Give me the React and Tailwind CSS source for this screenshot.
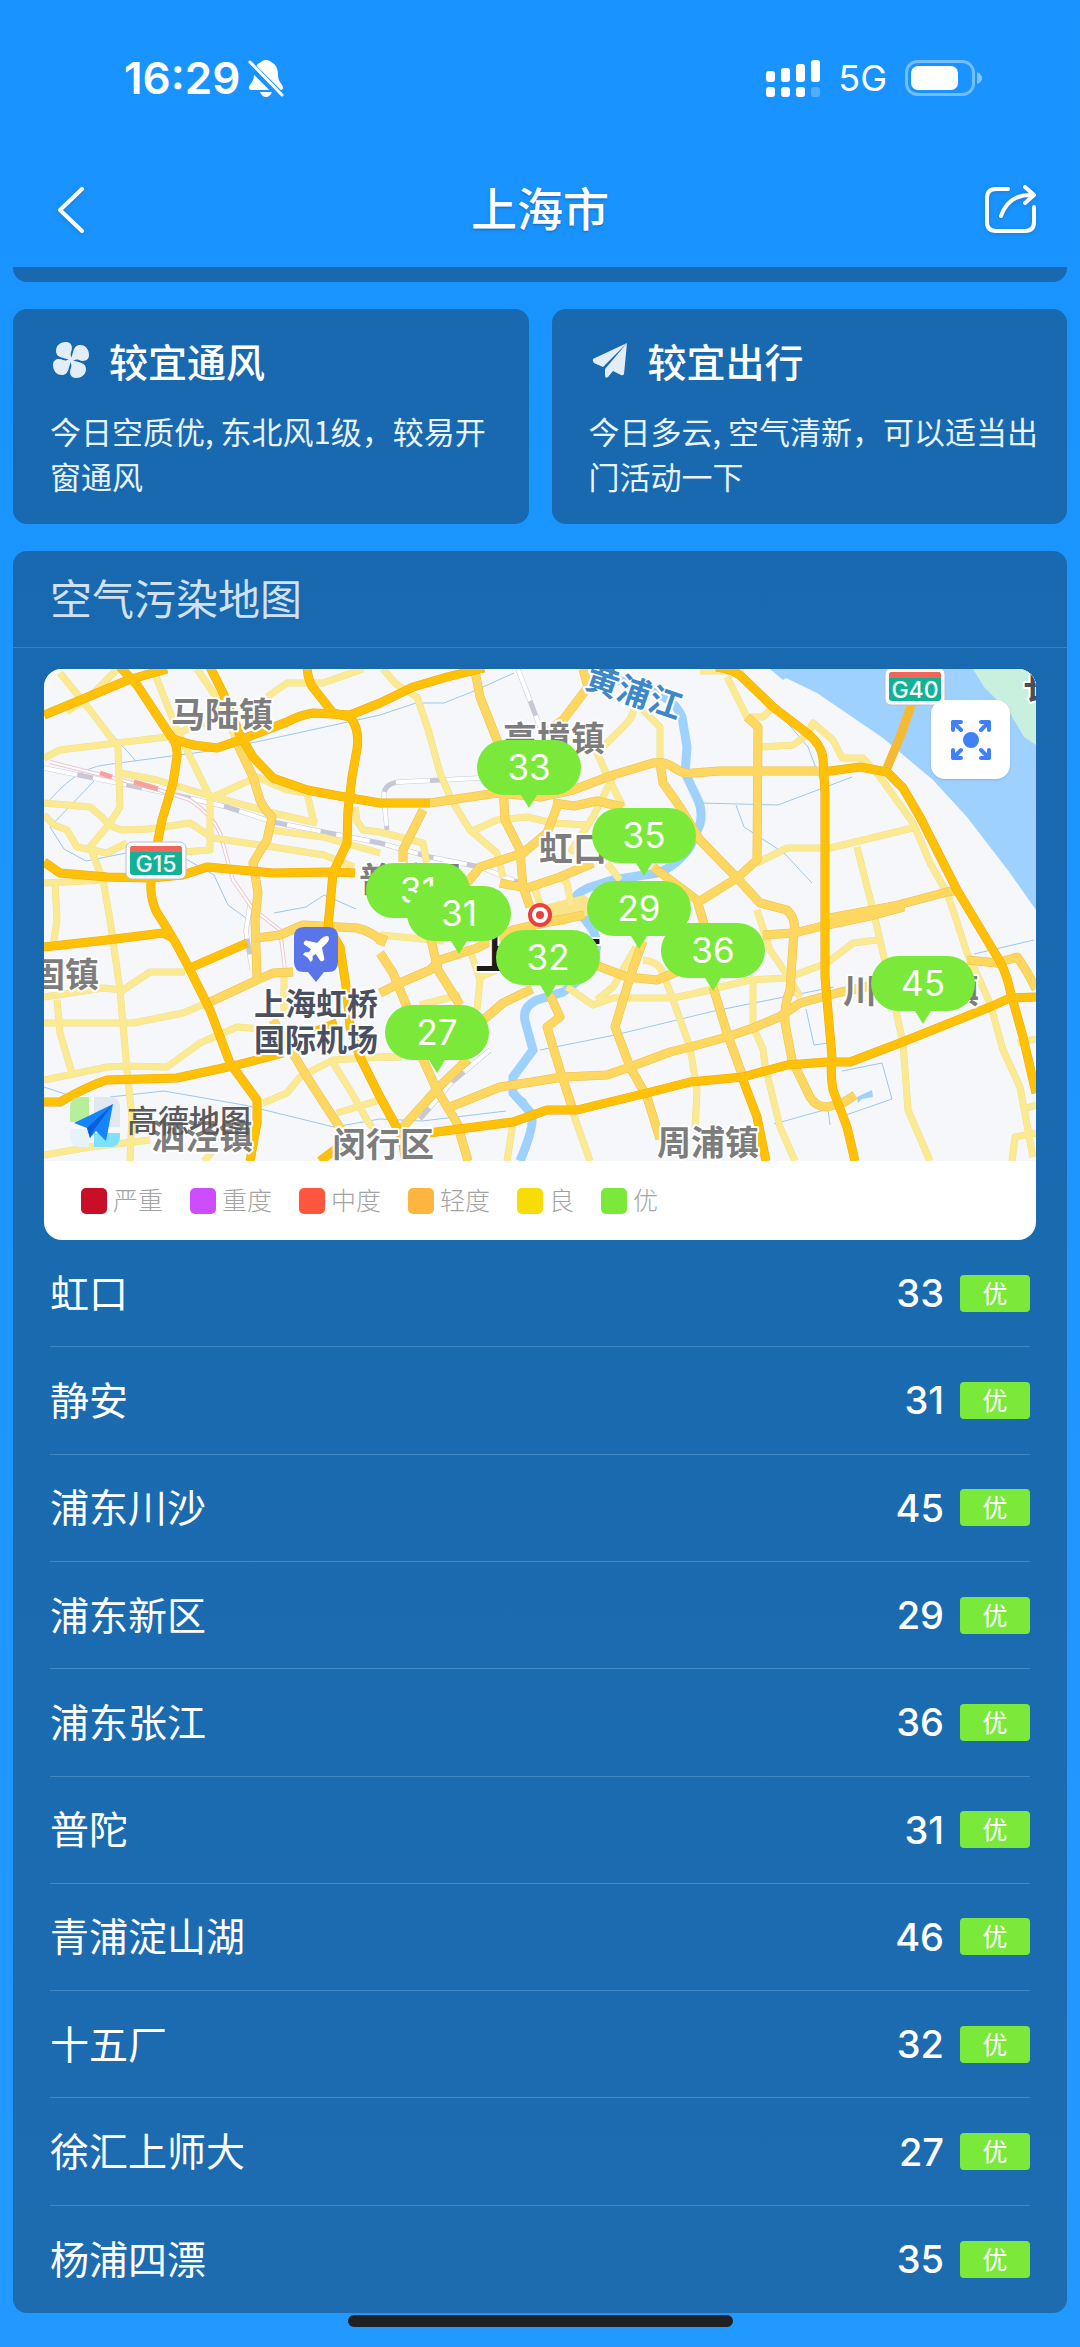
const INTER = "font-['Inter','Noto_Sans_CJK_SC',sans-serif]";

const MAP_W = 992;
const MAP_H = 492;

const tips = [
  { icon: 'fan', title: '较宜通风', text: '今日空质优, 东北风1级，较易开窗通风' },
  { icon: 'plane', title: '较宜出行', text: '今日多云, 空气清新，可以适当出门活动一下' },
];

const stations = [
  { name: '虹口', aqi: 33 },
  { name: '静安', aqi: 31 },
  { name: '浦东川沙', aqi: 45 },
  { name: '浦东新区', aqi: 29 },
  { name: '浦东张江', aqi: 36 },
  { name: '普陀', aqi: 31 },
  { name: '青浦淀山湖', aqi: 46 },
  { name: '十五厂', aqi: 32 },
  { name: '徐汇上师大', aqi: 27 },
  { name: '杨浦四漂', aqi: 35 },
];

const legend = [
  { label: '严重', color: 'bg-[#c80f27]' },
  { label: '重度', color: 'bg-[#cd4dfd]' },
  { label: '中度', color: 'bg-[#ff573f]' },
  { label: '轻度', color: 'bg-[#ffb53e]' },
  { label: '良', color: 'bg-[#f7dd05]' },
  { label: '优', color: 'bg-[#7ae93a]' },
];

// x is the tip of the pin, y the top of its bubble
const pins = [
  { aqi: 33, x: 485, y: 71 },
  { aqi: 35, x: 600, y: 139 },
  { aqi: 31, x: 374, y: 194 },
  { aqi: 31, x: 415, y: 217 },
  { aqi: 29, x: 595, y: 212 },
  { aqi: 36, x: 669, y: 254 },
  { aqi: 32, x: 504, y: 261 },
  { aqi: 45, x: 879, y: 287 },
  { aqi: 27, x: 393, y: 336 },
];

const minorRoads = [
  'M16 4L46 41L74 78L76 138L66 154L46 178L59 211L66 251L76 321L83 401L88 448L86 492',
  'M73 0L52 22L23 43',
  'M0 89L16 81L73 74L123 68L160 54',
  'M109 0L133 61L166 128L166 181L138 183',
  'M153 0L172 28L183 48L193 74',
  'M76 104L113 111L153 123L229 144L273 154',
  'M169 128L213 108L243 121L263 124L270 154',
  'M0 134L46 138L58 148Q68 160 79 161L105 160L146 154L169 169L229 178L280 186L310 198',
  'M0 146L10 156L23 161L33 178L63 184L83 174',
  'M226 161L279 168L336 184',
  'M223 28L243 14L279 14L319 0',
  'M311 138L313 152L319 161L336 163L379 174L383 196',
  'M0 214L63 211',
  'M11 214L13 251L9 278',
  'M0 328L59 319L79 321L106 303L141 303',
  'M0 354L89 354L139 344L163 334',
  'M0 411L63 398L83 397L123 398L156 374L193 358L229 361',
  'M13 331L16 364L28 404',
  'M0 486L46 478L106 471',
  'M219 434L243 424L256 408L289 391L336 388L358 388',
  'M289 394L306 421L323 451L336 470',
  'M293 444L336 431',
  'M160 492L172 478',
  'M339 0L352 15L373 28L384 60L396 104L408 132L426 161L453 184L459 208',
  'M426 163L453 151L483 148L509 154L543 156',
  'M589 34Q592 44 583 54L553 84L563 106L579 138',
  'M599 41L616 58L616 94',
  'M569 108L549 148L526 184',
  'M563 194L576 211',
  'M516 208L523 214L527 236',
  'M490 218L498 240',
  'M683 8L703 48L719 48L728 39',
  'M718 78L749 76L763 66L769 54L789 71L798 89L819 89L836 108L869 154L886 194L903 224L909 241L923 284L946 334L959 381L976 418L989 488',
  'M713 194L743 179L786 179L873 158',
  'M813 178L829 241L843 301L859 374L864 441L886 492',
  'M713 241L726 281L746 310L756 328',
  'M656 323L706 311L743 309L783 294L809 274L833 271',
  'M709 311L709 358L719 380L721 396L736 458L751 492',
  'M968 492L971 468L992 464',
  'M974 374L992 370',
  'M980 440L992 436',
  'M523 318L549 336L569 329L629 329L672 320',
  'M553 331L569 318L592 278',
  'M599 291Q614 292 619 304L629 331L646 378L653 421L651 461',
  'M469 454L463 492',
  'M529 444L546 492',
  'M426 281L436 311L433 341',
  'M376 336L416 326',
  'M436 308L470 294',
  'M336 388L358 388',
  'M336 266L400 272',
  'M240 304L240 350',
  'M656 2L700 2',
];

const midRoads = [
  'M193 74L209 108L216 131Q220 140 228 148L223 171L209 194L214 224L211 251L213 308',
  'M213 269L236 266L259 256L313 259Q326 262 338 272',
  'M166 333L213 311L229 304L249 303',
  'M229 351L263 408L298 462',
  'M431 2L436 28L453 71L459 118L461 151L476 181L479 218L486 238',
  'M386 134L453 124L496 128L529 121L569 106L609 94Q620 92 629 98Q640 106 649 104L676 102L779 102',
  'M379 141L359 181L359 194',
  'M539 0L544 18L519 51L503 62',
  'M509 134L530 137L553 132L579 138',
  'M513 138L503 164L479 184L436 198L423 214L400 230',
  'M456 214L483 219L516 208L549 194',
  'M616 94L619 114L636 138L656 171L693 209L716 234L743 241Q752 250 750 261L746 321Q740 336 741 354L748 391L766 428Q772 438 783 438L799 434L811 426',
  'M609 198L653 231L662 262',
  'M656 232L693 209L713 191L714 58L703 48',
  'M786 249L850 237L903 223L916 221',
  'M719 266L750 264L783 256L830 246L860 238',
  'M406 438L456 418L469 416L519 408L563 406L586 398L626 383L646 378L683 368L709 359L735 348L756 334L793 324L830 316',
  'M336 324L356 314L386 301L396 291L433 279L469 261L500 254L540 246',
  'M336 284L349 304L363 338',
  'M386 266L394 301L416 336',
  'M376 384L393 421L413 454L424 492',
  'M488 320L459 334L438 352',
  'M424 390L395 418L359 458',
  'M506 326L516 348L503 358L516 401L529 441',
  'M546 294L583 308L613 311L640 300',
  'M599 272L586 308L571 358L586 398L603 428L616 470',
  'M669 318L683 364L699 408',
  'M923 291L953 294L973 288Q982 300 992 320',
  'M340 266L336 276',
];

const majorRoads = [
  'M0 46L39 30L84 11L123 0',
  'M76 -2L93 16L126 66Q134 74 133 88L129 114L118 151L114 171L107 214Q106 228 112 242L124 261L134 278L146 301L166 341L186 394L213 431L213 454L206 492',
  'M126 69L149 76L173 79L196 71L243 53Q256 46 269 44L306 46L336 34L369 18L403 8L440 -1',
  'M166 -2L179 24L196 66L209 88L229 109L263 121L306 129L336 134L386 134',
  'M263 -2Q264 14 271 21L289 44L306 48Q316 60 313 80L308 108L304 141L303 174L289 204L284 258L296 278L303 324L306 358L316 388L336 428L358 468L361 488',
  'M0 193L16 204L63 208L106 209L139 206L163 198L229 204L289 203L311 204',
  'M0 278L63 271L119 264L127 268',
  'M146 299L203 274',
  'M0 433L16 433Q46 416 63 411L133 409L193 396L239 384',
  'M262 366L293 354',
  'M276 492L300 474',
  'M385 464L469 453L503 441L533 441L603 424L646 413L699 408L743 396L783 393L806 393L856 374L946 338L966 329L992 328',
  'M672 -2Q690 0 699 9L729 38L763 64Q778 76 779 90L781 124L781 308L788 388Q786 404 789 421L803 458L811 492',
  'M779 103L816 98L843 103L859 119L876 148L913 221L949 281Q962 300 966 321L979 368L992 424',
  'M699 411L713 448L722 492',
];

const creeks = [
  'M0 138Q30 100 60 96L180 80L336 46L372 34L400 34L430 22L470 4',
  'M46 41L92 92',
  'M50 112L6 158L20 180L42 192L82 184',
  'M142 190L170 206L184 236L206 252',
  'M230 244L262 238L280 226L312 240',
  'M0 418L24 426',
  'M66 428L120 422L200 436L290 458L336 450L378 452L462 442',
  'M496 381L571 366L670 342L790 318',
  'M656 134L734 136L808 108',
  'M692 136L700 158L740 184L768 214',
  'M718 24L764 78L776 110',
  'M930 285L990 271',
  'M798 402L838 394L848 430L802 446',
  'M730 455L784 440L786 456',
  'M762 340L770 376L784 374',
];

const rails = [
  'M0 99L123 124L183 138L229 153L336 174L386 188L436 198L476 214',
  'M474 0L496 58',
  'M436 109L356 113Q338 114 340 130L343 161',
  'M446 381L408 413L376 450',
  'M206 236L202 262L208 300',
];

const redLine = 'M6 93L109 119L146 131Q168 146 176 164L189 211L209 240L236 261L241 301';

const townLabels = [
  { text: '马陆镇', x: 178, y: 58 },
  { text: '高境镇', x: 510, y: 82 },
  { text: '虹口', x: 529, y: 192 },
  { text: '普陀区', x: 366, y: 223 },
  { text: '川沙新镇', x: 867, y: 334 },
  { text: '固镇', x: 21, y: 318 },
  { text: '泗泾镇', x: 158, y: 480 },
  { text: '闵行区', x: 339, y: 488 },
  { text: '周浦镇', x: 664, y: 486 },
];

function StatusBar() {
  return (
    <div className={`flex h-[156px] items-center justify-between pr-[98px] pl-[124px] text-white ${INTER}`}>
      <div className="flex items-center gap-2">
        <span className="text-[44px] leading-none font-semibold">16:29</span>
        <svg className="h-[38px] w-9" viewBox="0 0 36 38" aria-label="静音">
          <path
            d="M18 1C21 1 22 2 23 3C28 5 30 10 30 16C30 23 35 25 35 29Q35 31 32 31H4Q1 31 1 29C1 25 6 23 6 16C6 10 8 5 13 3C14 2 15 1 18 1Z"
            fill="#fff"
          />
          <path d="M12 33H24Q22 38 18 38Q14 38 12 33Z" fill="#fff" />
          <path d="M0 4L34 38" stroke="#1893ff" strokeWidth="8" />
          <path d="M2 3L34 36" stroke="#fff" strokeWidth="3" strokeLinecap="round" />
        </svg>
      </div>
      <div className="flex items-center gap-[18px]">
        <svg className="h-[38px] w-[54px]" viewBox="0 0 54 38" fill="#fff" aria-label="信号">
          <rect x="0" y="12" width="9" height="11" rx="3" />
          <rect x="15" y="9" width="9" height="14" rx="3" />
          <rect x="30" y="5" width="9" height="18" rx="3" />
          <rect x="45" y="1" width="9" height="22" rx="3" />
          <rect x="0" y="28" width="9" height="10" rx="3" />
          <rect x="15" y="28" width="9" height="10" rx="3" />
          <rect x="30" y="28" width="9" height="10" rx="3" />
          <rect x="45" y="28" width="9" height="10" rx="3" opacity="0.25" />
        </svg>
        <span className="text-[36px] leading-none">5G</span>
        <svg className="h-9 w-[77px]" viewBox="0 0 77 36" aria-label="电池">
          <rect x="1.5" y="1.5" width="67" height="33" rx="11" fill="none" stroke="#fff" strokeOpacity="0.4" strokeWidth="3" />
          <rect x="6" y="6" width="47" height="24" rx="7" fill="#fff" />
          <path d="M72 12Q77 14 77 18Q77 22 72 24Z" fill="#fff" opacity="0.45" />
        </svg>
      </div>
    </div>
  );
}

function NavBar() {
  return (
    <header className="flex h-[108px] items-center justify-between pr-[43px] pl-[57px] text-white">
      <button type="button" aria-label="返回" className="w-10 drop-shadow-sm">
        <svg className="h-12 w-7" viewBox="0 0 28 48" fill="none" stroke="#fff" strokeWidth="4" strokeLinecap="round" strokeLinejoin="round">
          <path d="M25 3L3 24L25 45" />
        </svg>
      </button>
      <h1 className="pb-2 text-[46px] leading-none font-medium text-shadow-md">上海市</h1>
      <button type="button" aria-label="分享" className="drop-shadow-sm">
        <svg className="h-[52px] w-[54px]" viewBox="0 0 54 52" fill="none" stroke="#fff" strokeWidth="4" strokeLinecap="round" strokeLinejoin="round">
          <path d="M25 5H13Q4 5 4 14V38Q4 47 13 47H42Q51 47 51 38V23" />
          <path d="M18 32Q26 10 49 11M42 3L51 11L42 19" />
        </svg>
      </button>
    </header>
  );
}

function TipIcon({ name }) {
  if (name === 'fan') {
    const blade = 'M18 19C13 15 3 17 3 9C3 3 8 0 13 0C19 0 20 6 18 10C17 13 18 15 20 18Z';
    return (
      <svg className="size-9" viewBox="0 0 36 36" fill="#e3edf8">
        <path d={blade} />
        <path d={blade} transform="rotate(90 18 18)" />
        <path d={blade} transform="rotate(180 18 18)" />
        <path d={blade} transform="rotate(270 18 18)" />
      </svg>
    );
  }
  return (
    <svg className="size-9" viewBox="0 0 36 36" fill="#e3edf8">
      <path d="M1 19Q0 17 3 16L35 1L11 25L2 21Z" />
      <path d="M35 1L32 32Q31 34 29 33L21 29L16 35Q13 37 13 33V27Z" />
    </svg>
  );
}

function TipCard({ tip }) {
  return (
    <section className="rounded-[14px] bg-[#1869b0] pt-[29px] pr-5 pb-[26px] pl-[37px] text-white">
      <h2 className="flex items-center gap-5 pl-[3px] text-[39px] leading-11 font-medium">
        <TipIcon name={tip.icon} />
        {tip.title}
      </h2>
      <p className="mt-[26px] text-[31px] leading-[45px] text-[#e9f3fc]">{tip.text}</p>
    </section>
  );
}

function RoadBadge({ x, y, text }) {
  return (
    <g>
      <rect x={x} y={y} width="60" height="37" rx="6" fill="#fff" stroke="#b9bfd0" strokeWidth="1" />
      <rect x={x + 4} y={y + 4} width="52" height="29" rx="3" fill="#12b296" />
      <path d={`M${x + 4} ${y + 10}V${y + 7}Q${x + 4} ${y + 4} ${x + 7} ${y + 4}H${x + 53}Q${x + 56} ${y + 4} ${x + 56} ${y + 7}V${y + 10}Z`} fill="#f0655c" />
      <text x={x + 30} y={y + 30} textAnchor="middle" className="fill-white font-['Inter',sans-serif] text-[23px] font-medium">
        {text}
      </text>
    </g>
  );
}

function Roads({ paths, width, color, edge }) {
  return (
    <g fill="none" strokeLinejoin="round">
      {paths.map((d) => (
        <path key={`${d}-edge`} d={d} stroke={edge} strokeWidth={width + 1} />
      ))}
      {paths.map((d) => (
        <path key={d} d={d} stroke={color} strokeWidth={width} />
      ))}
    </g>
  );
}

function CityMap() {
  return (
    <svg className="block h-auto w-full" viewBox={`0 0 ${MAP_W} ${MAP_H}`} role="img" aria-label="上海市地图">
      <rect width={MAP_W} height={MAP_H} fill="#f5f7fb" />
      <path d="M726 0L739 11L742 9L773 24L839 69L889 111L923 148L966 204L992 241V0Z" fill="#9fd1ff" />
      <path d="M929 0L940 18L966 44L980 68L992 76V0Z" fill="#c9f0de" />

      <g fill="none" stroke="#9cc8ee" strokeWidth="1">
        {creeks.map((d) => (
          <path key={d} d={d} />
        ))}
      </g>
      <path
        d="M566 8L600 20Q630 28 638 48L643 78L641 104L654 131Q659 142 656 155L646 178Q632 198 613 204L569 211L544 219Q528 226 530 236L549 261Q556 276 549 290Q540 310 519 323L493 331Q478 338 481 352L489 381L469 408L469 424L487 444Q492 454 476 492"
        fill="none"
        stroke="#9fd1ff"
        strokeWidth="9"
      />
      <path d="M466 420L482 430L490 446L480 442Z" fill="#9fd1ff" />
      <path d="M813 428L828 421L829 428L818 430L814 434Z" fill="#9fd1ff" />

      <g fill="none">
        {rails.map((d) => (
          <path key={d} d={d} stroke="#c6c8d6" strokeWidth="5" />
        ))}
        {rails.map((d) => (
          <path key={`${d}-gap`} d={d} stroke="#fff" strokeWidth="4" strokeDasharray="34 16" />
        ))}
        <path d={redLine} stroke="#eec6d0" strokeWidth="4" />
        <path d={redLine} stroke="#fff" strokeWidth="2" />
        <path d="M56 104L68 108M90 113L114 120" stroke="#f7a29c" strokeWidth="5" />
      </g>

      <path d="M500 236L540 226L560 240L520 256L490 258Z" fill="#fbe38a" />
      <Roads paths={minorRoads} width={6} color="#fcea93" edge="#f3df86" />
      <Roads paths={midRoads} width={8} color="#fed760" edge="#ecc04c" />
      <path d="M843 99L856 68L868 34" fill="none" stroke="#f4ba32" strokeWidth="9" />
      <Roads paths={majorRoads} width={8} color="#ffc107" edge="#eeab08" />

      <RoadBadge x={82} y={173} text="G15" />
      <RoadBadge x={841} y={-1} text="G40" />

      <g className="fill-[#7d7d7d] stroke-white stroke-4 text-[34px] font-bold" strokeLinejoin="round" paintOrder="stroke" textAnchor="middle">
        {townLabels.map((l) => (
          <text key={l.text} x={l.x} y={l.y}>
            {l.text}
          </text>
        ))}
        <text x="590" y="35" transform="rotate(19 590 24)" className="fill-[#3c88c8] text-[33px]">
          黄浦江
        </text>
        <text x="996" y="30" className="fill-[#4a4f57]">
          长
        </text>
        <text x="494" y="300" className="fill-[#1c1c1c] text-[42px]">
          上海市
        </text>
        <g className="fill-[#4a5060] text-[31px]">
          <text x="272" y="346">上海虹桥</text>
          <text x="272" y="382">国际机场</text>
        </g>
      </g>

      <path d="M260 258H284Q294 258 294 268V293Q294 303 284 303H280L272 313L264 303H260Q250 303 250 293V268Q250 258 260 258Z" fill="#5a74ea" />
      <path
        d="M17.8 19.2L16 11l3.5-3.5C21 6 21.5 4 21 3c-1-.5-3 0-4.5 1.500L13 8 4.800 6.200c-.5-.1-.9.1-1.100.5l-.3.5c-.2.5-.1 1 .3 1.300L9 12l-2 3H4l-1 1 3 2 2 3 1-1v-3l3-2 3.500 5.300c.3.4.8.5 1.300.3l.5-.2c.4-.3.6-.7.5-1.200z"
        fill="#fff"
        stroke="#fff"
        strokeWidth="1"
        transform="translate(256 264) scale(1.33)"
      />

      <circle cx="496" cy="246" r="12" fill="#ea4040" />
      <circle cx="496" cy="246" r="8" fill="#fff" />
      <circle cx="496" cy="246" r="4" fill="#ea4040" />

      <g>
        <path d="M45 428V453H26V438Q26 428 36 428Z" fill="#b6ee9a" />
        <path d="M50 428H66Q76 428 76 438V458H50Z" fill="#e3e8f0" />
        <path d="M26 460H45V478H36Q26 478 26 468Z" fill="#e6f3fb" />
        <path d="M50 464H76V468Q76 478 66 478H50Z" fill="#7fe0ff" />
        <path d="M69 435L30 454L43 459L46 469L52 462L62 472Z" fill="#1485ff" />
        <path d="M69 435L43 459L46 469L50 461Z" fill="#0a5fd6" />
        <text x="83" y="463" className="fill-[#5a5a5a] text-[31px] font-medium">
          高德地图
        </text>
      </g>
    </svg>
  );
}

function Pin({ pin }) {
  return (
    <div
      className="absolute flex -translate-x-1/2 flex-col items-center"
      style={{ left: `${(pin.x / MAP_W) * 100}%`, top: `${(pin.y / MAP_H) * 100}%` }}
    >
      <span className={`flex h-[55px] w-[104px] items-center justify-center rounded-full bg-[#7ae93a] text-[35px] leading-none text-white ${INTER}`}>
        {pin.aqi}
      </span>
      <svg className="h-[13px] w-4" viewBox="0 0 16 13" fill="#7ae93a">
        <path d="M0 0H16L8 13Z" />
      </svg>
    </div>
  );
}

function PollutionMap() {
  return (
    <div className="mx-[31px] mt-[21px] overflow-hidden rounded-[18px] bg-white">
      <div className="relative overflow-hidden">
        <CityMap />
        {pins.map((p) => (
          <Pin key={`${p.x}-${p.y}`} pin={p} />
        ))}
        <button
          type="button"
          aria-label="全屏"
          className="absolute top-[31px] right-[26px] flex size-[79px] items-center justify-center rounded-[14px] bg-white shadow-sm"
        >
          <svg className="size-10" viewBox="0 0 40 40" fill="none" stroke="#4181f7" strokeWidth="4" strokeLinecap="round" strokeLinejoin="round">
            <circle cx="20" cy="20" r="8" fill="#4181f7" stroke="none" />
            <path d="M2 10V2H10M2 2L10 10" />
            <path d="M30 2H38V10M38 2L30 10" />
            <path d="M2 30V38H10M2 38L10 30" />
            <path d="M30 38H38V30M38 38L30 30" />
          </svg>
        </button>
      </div>
      <ul className="flex h-[79px] items-center gap-[27px] px-[37px] text-[25px] leading-none font-light text-[#a3a3a3]">
        {legend.map((l) => (
          <li key={l.label} className="flex items-center gap-[6px]">
            <span className={`size-[26px] rounded-[5px] ${l.color}`} />
            <span className="pb-[2px]">{l.label}</span>
          </li>
        ))}
      </ul>
    </div>
  );
}

function StationList() {
  return (
    <ul className="grid min-h-[1073px] auto-rows-fr px-[37px]">
      {stations.map((s) => (
        <li key={s.name} className="flex items-center border-b border-[#4287c3] text-white last:border-b-0">
          <span className="flex-1 pb-1 text-[39px] leading-none">{s.name}</span>
          <span className={`text-[38px] leading-none font-medium ${INTER}`}>{s.aqi}</span>
          <span className="ml-4 flex h-[37px] w-[70px] items-center justify-center rounded-[4px] bg-[#7ae93a] pb-[2px] text-[25px] leading-none">
            优
          </span>
        </li>
      ))}
    </ul>
  );
}

export default function App() {
  return (
    <div className="min-h-screen bg-linear-to-b from-[#1893ff] to-[#2299ff] font-['Noto_Sans_CJK_SC',sans-serif]">
      <StatusBar />
      <NavBar />
      <main className="px-[13px] pt-[3px]">
        <div className="h-[15px] rounded-b-[14px] bg-[#1869b0]" />
        <div className="mt-[27px] grid grid-cols-2 gap-[23px]">
          {tips.map((t) => (
            <TipCard key={t.title} tip={t} />
          ))}
        </div>
        <section className="mt-[27px] rounded-[14px] bg-linear-to-b from-[#1869b0] to-[#1d6cb0]">
          <h2 className="flex h-[97px] items-center border-b border-[#3a80bd] px-[37px] pb-1 text-[42px] leading-none text-[#cfe1f3]">
            空气污染地图
          </h2>
          <PollutionMap />
          <StationList />
        </section>
      </main>
      <div className="flex justify-center pt-[2px] pb-5">
        <div className="h-3 w-[385px] rounded-full bg-[#1f2123]" />
      </div>
    </div>
  );
}
